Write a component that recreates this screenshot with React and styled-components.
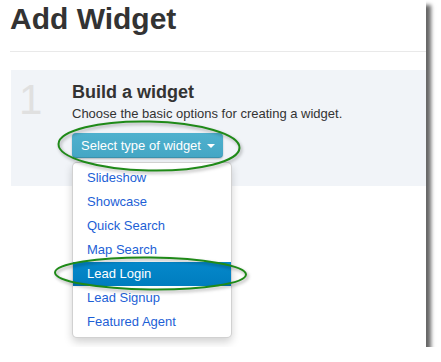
import React from "react";
import styled, { createGlobalStyle } from "styled-components";

const Global = createGlobalStyle`
  html, body { margin: 0; padding: 0; background: #fff; }
  body { font-family: "Liberation Sans", Arial, sans-serif; color: #333; }
`;

const Frame = styled.div`
  position: relative;
  width: 426px;
  height: 347px;
  background: #fff;
  box-shadow: 5px 5px 4px rgba(0, 0, 0, 0.6);
  padding-left: 10px;
  box-sizing: border-box;
`;

const Title = styled.h1`
  margin: 0;
  padding-top: 1px;
  font-size: 30px;
  line-height: 36px;
  font-weight: bold;
  color: #333;
`;

const Rule = styled.div`
  margin-top: 14px;
  height: 1px;
  background: #e9e9e9;
`;

const Panel = styled.section`
  margin: 18px 0 0 1px;
  padding: 12px 0 28px 8px;
  background: #f1f4f8;
  display: grid;
  grid-template-columns: 53px 1fr;
  align-items: start;
`;

const StepNumber = styled.div`
  font-size: 42px;
  line-height: 36px;
  color: #e0e0e0;
`;

const Body = styled.div`
  position: relative;
  display: flex;
  flex-direction: column;
  align-items: flex-start;
`;

const Heading = styled.h2`
  margin: 0;
  font-size: 18px;
  line-height: 20px;
  font-weight: bold;
  color: #333;
`;

const Description = styled.p`
  margin: 3px 0 0;
  font-size: 13px;
  line-height: 18px;
  color: #333;
`;

const DropButton = styled.button`
  margin-top: 10px;
  height: 25px;
  display: flex;
  align-items: center;
  gap: 6px;
  padding: 0 8px 0 9px;
  border: none;
  border-radius: 4px;
  background: linear-gradient(#4fb1ce, #44a6c4);
  box-shadow: 0 1px 2px rgba(0, 0, 0, 0.25), inset 0 -1px 0 rgba(0, 0, 0, 0.12);
  color: #fff;
  font-family: "Liberation Sans", Arial, sans-serif;
  font-size: 13px;
  line-height: 25px;
`;

const Caret = styled.span`
  width: 0;
  height: 0;
  border-left: 4px solid transparent;
  border-right: 4px solid transparent;
  border-top: 4px solid #fff;
  margin-top: 1px;
`;

const Menu = styled.ul`
  position: absolute;
  left: 72px;
  top: 162px;
  width: 160px;
  box-sizing: border-box;
  margin: 0;
  padding: 3px 0;
  list-style: none;
  background: #fff;
  border: 1px solid rgba(0, 0, 0, 0.18);
  border-radius: 5px;
  box-shadow: 0 4px 9px rgba(0, 0, 0, 0.18);
  z-index: 2;
`;

const MenuItem = styled.li`
  height: 24px;
  line-height: 24px;
  padding-left: 14px;
  font-size: 13px;
  color: ${(p) => (p.$active ? "#fff" : "#1d5fd6")};
  background: ${(p) => (p.$active ? "linear-gradient(#0588cb, #007dbf)" : "transparent")};
`;

const Annotations = styled.svg`
  position: absolute;
  left: 0;
  top: 0;
  width: 426px;
  height: 347px;
  pointer-events: none;
  z-index: 3;
  overflow: visible;
`;

const items = [
  "Slideshow",
  "Showcase",
  "Quick Search",
  "Map Search",
  "Lead Login",
  "Lead Signup",
  "Featured Agent",
];

function Ring({ cx, cy, rx, ry, rot }) {
  return (
    <g transform={`rotate(${rot} ${cx} ${cy})`}>
      <ellipse cx={cx + 1.5} cy={cy + 2} rx={rx} ry={ry} fill="none" stroke="rgba(0,0,0,0.22)" strokeWidth="3" filter="url(#blur)" />
      <ellipse cx={cx} cy={cy} rx={rx} ry={ry} fill="none" stroke="#1f8a18" strokeWidth="2" />
    </g>
  );
}

export default function App() {
  return (
    <>
      <Global />
      <Frame>
        <Title>Add Widget</Title>
        <Rule />
        <Panel>
          <StepNumber>1</StepNumber>
          <Body>
            <Heading>Build a widget</Heading>
            <Description>Choose the basic options for creating a widget.</Description>
            <DropButton>
              Select type of widget
              <Caret />
            </DropButton>
          </Body>
        </Panel>
        <Menu>
          {items.map((t) => (
            <MenuItem key={t} $active={t === "Lead Login"}>
              {t}
            </MenuItem>
          ))}
        </Menu>
        <Annotations viewBox="0 0 426 347">
          <defs>
            <filter id="blur" x="-10%" y="-30%" width="120%" height="160%">
              <feGaussianBlur stdDeviation="1.5" />
            </filter>
          </defs>
          <Ring cx={149} cy={146} rx={90.5} ry={24.5} rot={1.2} />
          <Ring cx={150.5} cy={273.5} rx={95.5} ry={16} rot={0.6} />
        </Annotations>
      </Frame>
    </>
  );
}
